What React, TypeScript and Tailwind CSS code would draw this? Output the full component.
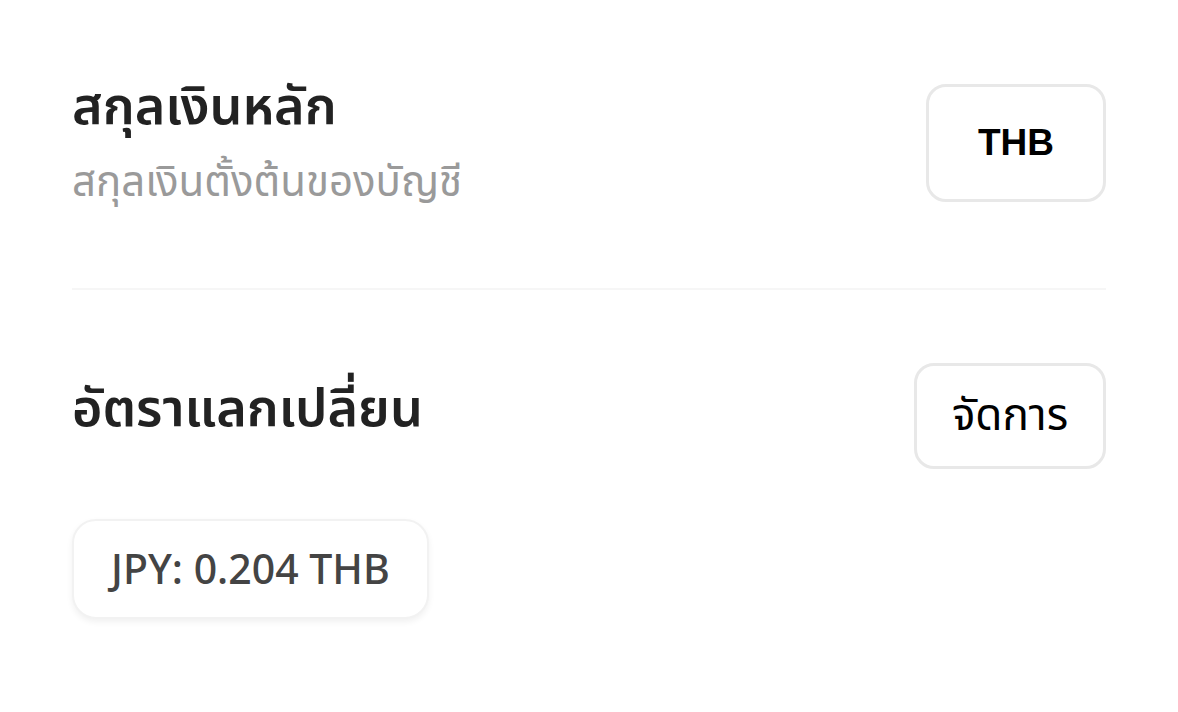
export default function App() {
  return (
    <div
      className="min-h-screen w-full bg-white px-[72px] pt-[72px]"
      style={{ fontFamily: '"Noto Sans", "Noto Sans Thai", sans-serif' }}
    >
      {/* Base currency */}
      <section className="flex items-start justify-between pb-[82px]">
        <div className="flex flex-col">
          <h2 className="text-[52px] font-semibold leading-[64px] text-[#222]">สกุลเงินหลัก</h2>
          <p className="mt-[18px] text-[42px] leading-[52px] text-[#9a9a9a]">สกุลเงินตั้งต้นของบัญชี</p>
        </div>
        <button className="mt-[12px] flex h-[118px] w-[180px] items-center justify-center rounded-[20px] border-[3px] border-[#e8e8e8] bg-white">
          <span
            className="text-[37px] font-bold text-black"
            style={{ fontFamily: '"Liberation Sans", Arial, sans-serif' }}
          >
            THB
          </span>
        </button>
      </section>

      <div className="h-[2px] w-full bg-[#f6f6f6]" />

      {/* Exchange rates */}
      <section className="pt-[73px]">
        <div className="flex items-center justify-between">
          <h2 className="pb-[20px] text-[52px] font-semibold leading-[64px] text-[#222]">อัตราแลกเปลี่ยน</h2>
          <button className="flex h-[106px] w-[192px] items-center justify-center rounded-[20px] border-[3px] border-[#e8e8e8] bg-white">
            <span className="pb-[6px] text-[44px] text-black">จัดการ</span>
          </button>
        </div>
        <div className="mt-[50px] flex">
          <div className="flex h-[100px] items-center rounded-[24px] border-[2px] border-[#f2f2f2] bg-white px-[37px] shadow-[0_3px_6px_rgba(0,0,0,0.06)]">
            <span className="text-[41px] font-medium text-[#444]">JPY: 0.204 THB</span>
          </div>
        </div>
      </section>
    </div>
  );
}
